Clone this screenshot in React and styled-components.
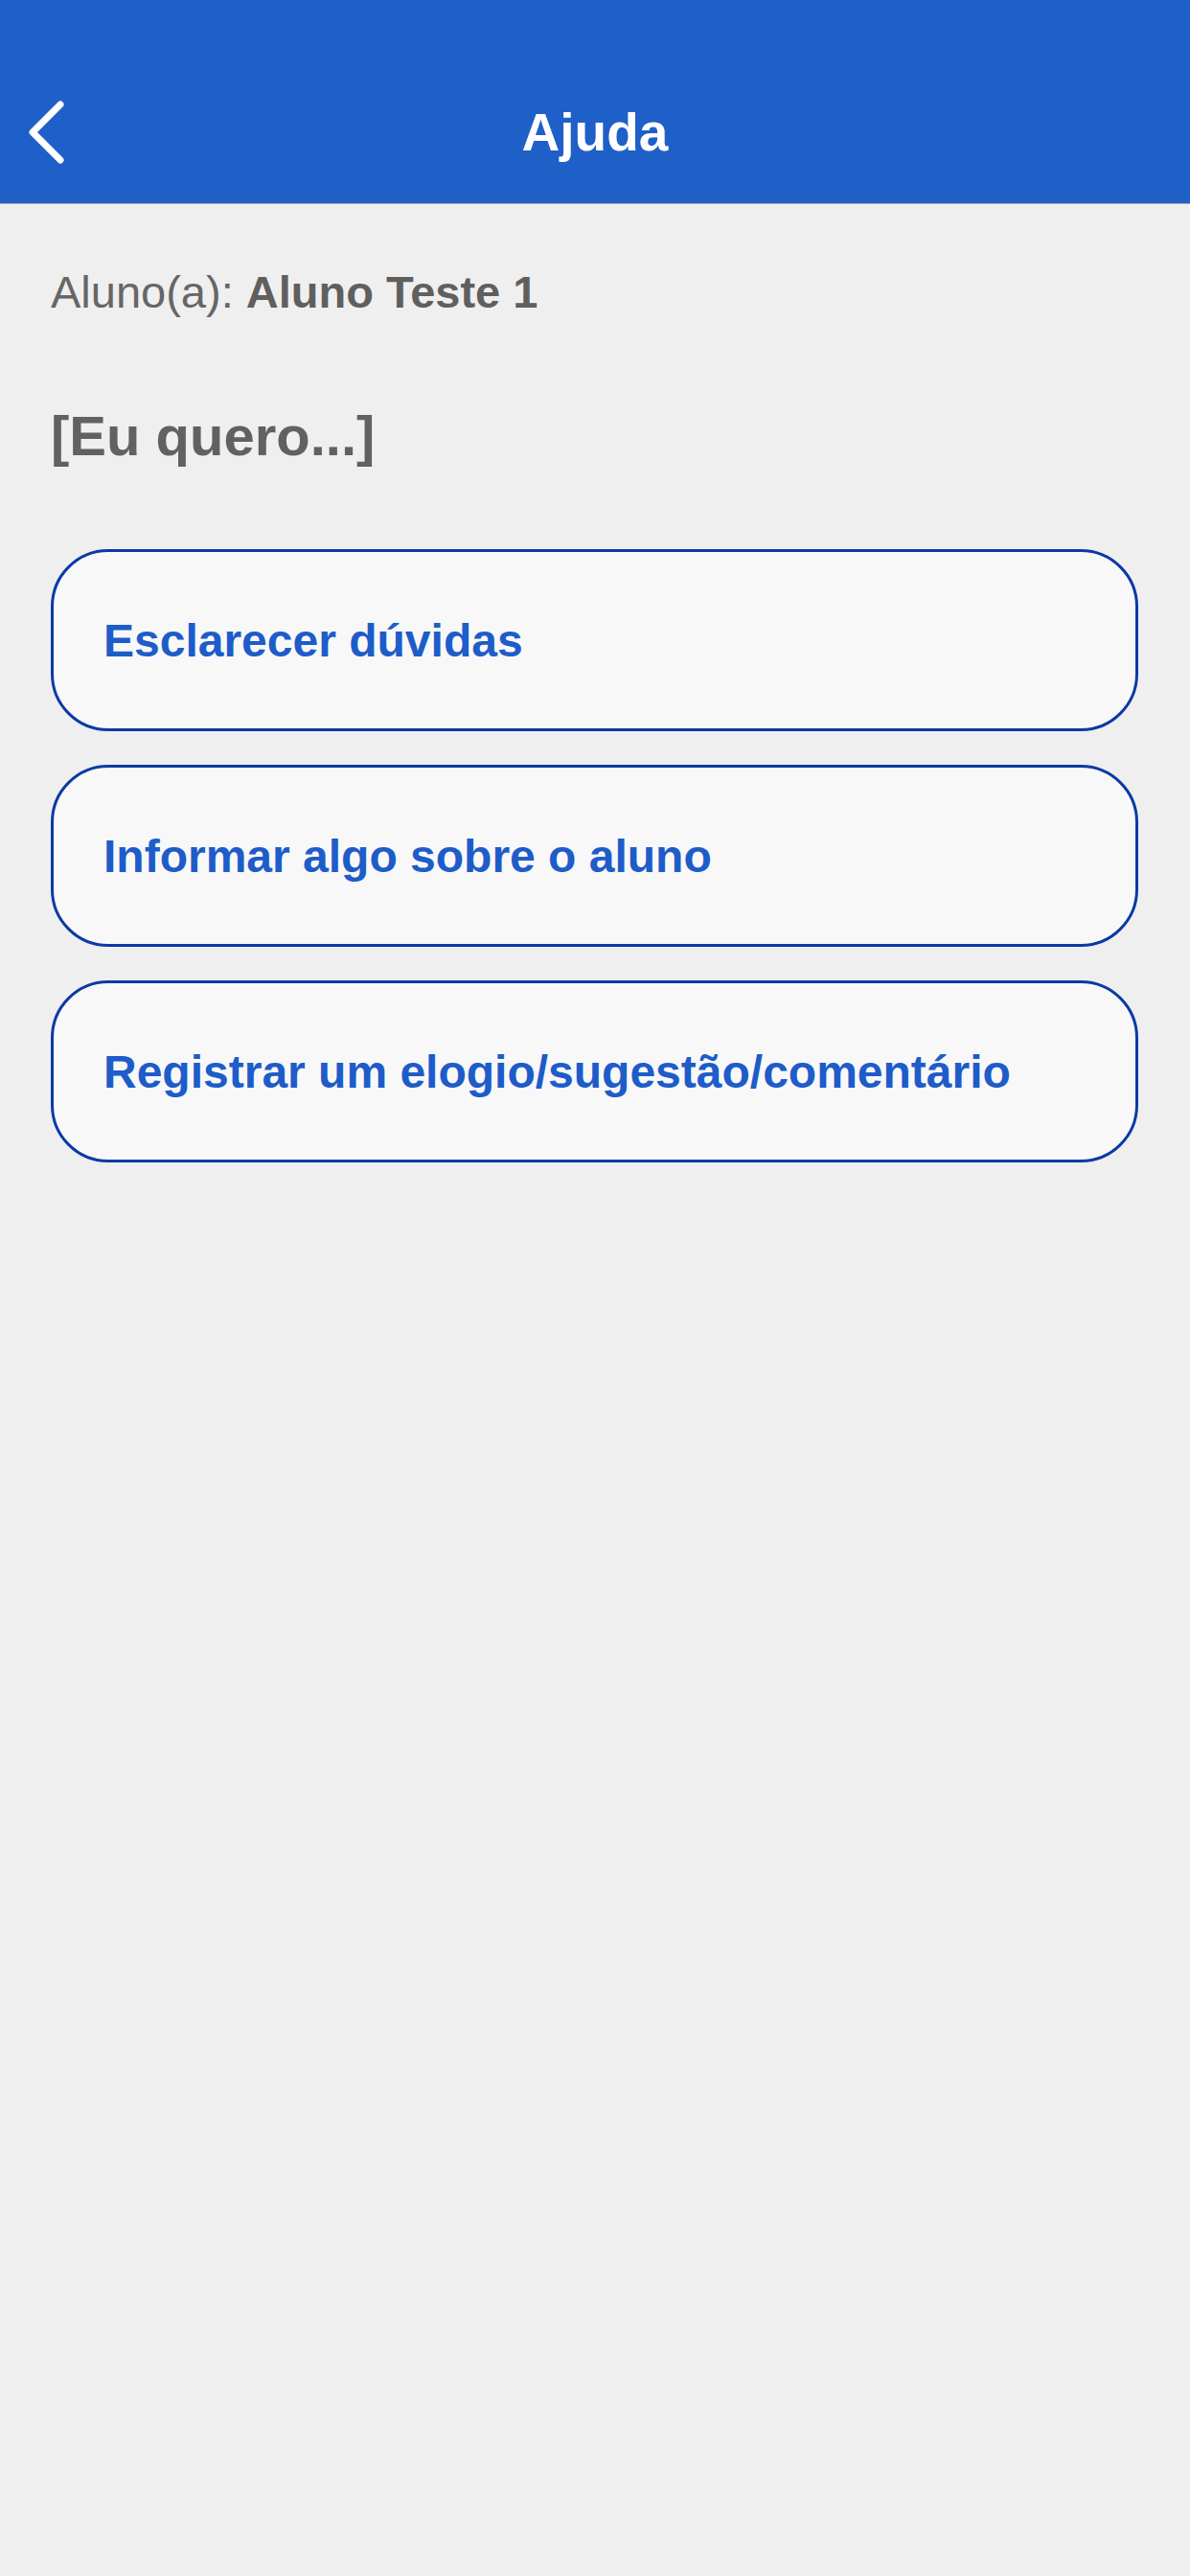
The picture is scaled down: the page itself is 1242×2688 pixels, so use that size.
import styled, { createGlobalStyle } from 'styled-components';

const GlobalStyle = createGlobalStyle`
  html, body {
    margin: 0;
    padding: 0;
    background: #efefef;
  }

  body {
    font-family: "Liberation Sans", Arial, sans-serif;
  }
`;

const Screen = styled.div`
  min-height: 2688px;
  background: #efefef;
`;

const Header = styled.header`
  height: 212px;
  box-sizing: border-box;
  padding-top: 64px;
  background: #1f5fc8;
  box-shadow: 0 1px 0 #a9a9a9;
`;

const NavBar = styled.div`
  position: relative;
  display: flex;
  align-items: center;
  justify-content: center;
  height: 148px;
`;

const BackButton = styled.button`
  position: absolute;
  left: 20px;
  top: 50%;
  transform: translateY(-50%);
  display: flex;
  align-items: center;
  justify-content: center;
  width: 56px;
  height: 80px;
  padding: 0;
  border: 0;
  background: transparent;
  cursor: pointer;
`;

const Title = styled.h1`
  margin: 0;
  color: #ffffff;
  font-size: 55px;
  font-weight: 700;
  line-height: 64px;
`;

const Content = styled.main`
  display: flex;
  flex-direction: column;
  padding: 65px 54px 0 53px;
`;

const Student = styled.p`
  margin: 0;
  color: #666666;
  font-size: 47px;
  line-height: 56px;

  strong {
    font-weight: 700;
    color: #5f5f5f;
  }
`;

const Prompt = styled.h2`
  margin: 89px 0 0;
  color: #616161;
  font-size: 58px;
  font-weight: 700;
  line-height: 66px;
`;

const Options = styled.div`
  display: flex;
  flex-direction: column;
  gap: 35px;
  margin-top: 85px;
`;

const Option = styled.button`
  display: flex;
  align-items: center;
  box-sizing: border-box;
  width: 100%;
  height: 190px;
  padding: 0 52px;
  border: 3px solid #0b3aa6;
  border-radius: 60px;
  background: #f8f8f8;
  color: #1d5cc9;
  font-family: "Liberation Sans", Arial, sans-serif;
  font-size: 48px;
  font-weight: 700;
  text-align: left;
  cursor: pointer;
`;

const options = [
  'Esclarecer dúvidas',
  'Informar algo sobre o aluno',
  'Registrar um elogio/sugestão/comentário',
];

function ChevronLeft() {
  return (
    <svg width="44" height="66" viewBox="0 0 44 66" fill="none">
      <path
        d="M37 4 L8 33 L37 62"
        stroke="#ffffff"
        strokeWidth="7"
        strokeLinecap="round"
        strokeLinejoin="round"
      />
    </svg>
  );
}

export default function App() {
  return (
    <Screen>
      <GlobalStyle />
      <Header>
        <NavBar>
          <BackButton aria-label="Voltar">
            <ChevronLeft />
          </BackButton>
          <Title>Ajuda</Title>
        </NavBar>
      </Header>
      <Content>
        <Student>
          Aluno(a): <strong>Aluno Teste 1</strong>
        </Student>
        <Prompt>[Eu quero...]</Prompt>
        <Options>
          {options.map((label) => (
            <Option key={label}>{label}</Option>
          ))}
        </Options>
      </Content>
    </Screen>
  );
}
